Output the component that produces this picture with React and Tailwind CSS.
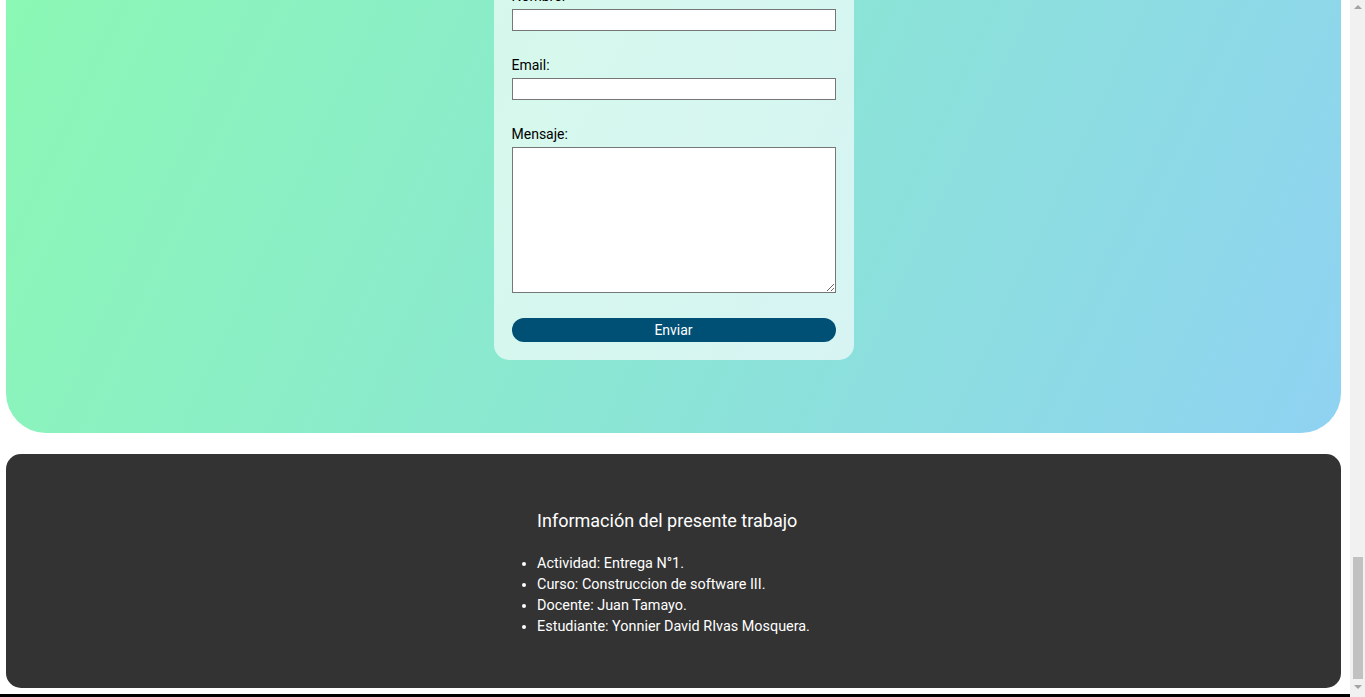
export default function App() {
    return (
        <div className="flex h-screen overflow-hidden bg-white font-['Roboto',sans-serif] text-black">
            <main className="flex-1 overflow-hidden">
                <section className="ml-[6px] mr-[9px] rounded-b-[40px] bg-[linear-gradient(115deg,#8bf8b4_0%,#8ae8d0_45%,#8fd2f2_100%)] pb-[73px]">
                    <div className="-mt-[12px] mx-auto w-[360px] rounded-b-[15px] bg-white/65 px-[18px] pb-[18px]">
                        <form className="flex flex-col">
                            <label className="mb-[4px] text-[14px] leading-[17px]">Nombre:</label>
                            <input type="text" className="h-[22px] border border-[#767676] bg-white" />

                            <label className="mt-[26px] mb-[4px] text-[14px] leading-[17px]">Email:</label>
                            <input type="email" className="h-[22px] border border-[#767676] bg-white" />

                            <label className="mt-[26px] mb-[4px] text-[14px] leading-[17px]">Mensaje:</label>
                            <textarea className="h-[146px] border border-[#767676] bg-white" />

                            <button type="button" className="mt-[25px] h-[24px] rounded-full bg-[#005075] text-[14px] text-white">
                                Enviar
                            </button>
                        </form>
                    </div>
                </section>

                <footer className="mt-[21px] ml-[6px] mr-[9px] h-[234px] rounded-[15px] bg-[#333333] pt-[55px] text-white">
                    <div className="mx-auto w-fit">
                        <h3 className="text-[18px] leading-[24px]">Información del presente trabajo</h3>
                        <ul className="mt-[20px] list-disc text-[14.4px] leading-[21px]">
                            <li>Actividad: Entrega N°1.</li>
                            <li>Curso: Construccion de software III.</li>
                            <li>Docente: Juan Tamayo.</li>
                            <li>Estudiante: Yonnier David RIvas Mosquera.</li>
                        </ul>
                    </div>
                </footer>
                <div className="mt-[6px] h-[3px] bg-black" />
            </main>

            {/* browser scrollbar, scrolled to the end */}
            <aside className="flex w-[15px] flex-col items-center bg-[#f1f1f1]">
                <div className="mt-[5px] h-0 w-0 border-x-[4px] border-b-[4px] border-x-transparent border-b-[#a3a3a3]" />
                <div className="flex-1" />
                <div className="h-[122px] w-[10px] bg-[#c1c1c1]" />
                <div className="mt-[6px] mb-[8px] h-0 w-0 border-x-[4px] border-t-[4px] border-x-transparent border-t-[#a3a3a3]" />
            </aside>
        </div>
    );
}
